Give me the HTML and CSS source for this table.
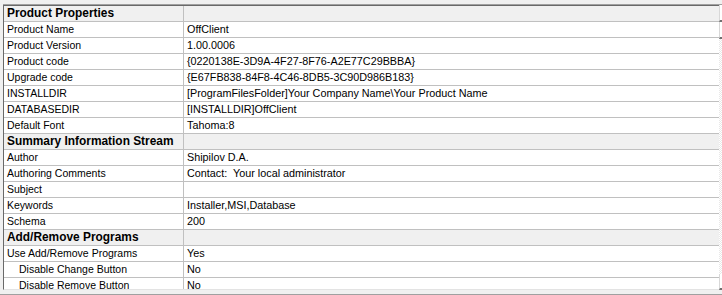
FILE: index.html
```html
<!DOCTYPE html>
<html>
<head>
<meta charset="utf-8">
<link rel="stylesheet" href="styles.css">
</head>
<body>
<div class="frame">
  <div class="grid">
    <div class="cell label head">Product Properties</div><div class="cell value head"></div>
    <div class="cell label">Product Name</div><div class="cell value">OffClient</div>
    <div class="cell label">Product Version</div><div class="cell value">1.00.0006</div>
    <div class="cell label">Product code</div><div class="cell value">{0220138E-3D9A-4F27-8F76-A2E77C29BBBA}</div>
    <div class="cell label">Upgrade code</div><div class="cell value">{E67FB838-84F8-4C46-8DB5-3C90D986B183}</div>
    <div class="cell label">INSTALLDIR</div><div class="cell value">[ProgramFilesFolder]Your Company Name\Your Product Name</div>
    <div class="cell label">DATABASEDIR</div><div class="cell value">[INSTALLDIR]OffClient</div>
    <div class="cell label">Default Font</div><div class="cell value">Tahoma:8</div>
    <div class="cell label head">Summary Information Stream</div><div class="cell value head"></div>
    <div class="cell label">Author</div><div class="cell value">Shipilov D.A.</div>
    <div class="cell label">Authoring Comments</div><div class="cell value">Contact:&nbsp; Your local administrator</div>
    <div class="cell label">Subject</div><div class="cell value"></div>
    <div class="cell label">Keywords</div><div class="cell value">Installer,MSI,Database</div>
    <div class="cell label">Schema</div><div class="cell value">200</div>
    <div class="cell label head">Add/Remove Programs</div><div class="cell value head"></div>
    <div class="cell label">Use Add/Remove Programs</div><div class="cell value">Yes</div>
    <div class="cell label sub">Disable Change Button</div><div class="cell value">No</div>
    <div class="cell label sub">Disable Remove Button</div><div class="cell value">No</div>
  </div>
  <div class="vscroll">
    <div class="sbtn"></div>
    <div class="thumb"></div>
    <div class="track"></div>
    <div class="sbtn down"></div>
  </div>
</div>
<div class="hbar"></div>
</body>
</html>
```
FILE: styles.css
```css
html, body {
  margin: 0;
  padding: 0;
  background: #f0f0f0;
  width: 722px;
  height: 295px;
  overflow: hidden;
}
body {
  font-family: "Liberation Sans", Arial, sans-serif;
  color: #000;
}
.frame {
  margin: 4px 0 0 3px;
  display: flex;
  height: 285px;
  border-top: 1px solid #a0a0a0;
}
.grid {
  flex: none;
  width: 715px;
  height: 283px;
  overflow: hidden;
  border-top: 1px solid #696969;
  border-left: 1px solid #696969;
  border-bottom: 1px solid #e3e3e3;
  display: grid;
  grid-template-columns: 180px 535px;
  grid-auto-rows: 16px;
  background: #fff;
}
.cell {
  box-sizing: border-box;
  height: 16px;
  border-bottom: 1px solid #c0c0c0;
  font-size: 10.5px;
  line-height: 15px;
  white-space: nowrap;
  overflow: hidden;
}
.label {
  border-right: 1px solid #c0c0c0;
  padding-left: 3px;
}
.value {
  padding-left: 3px;
  font-size: 10.8px;
}
.head {
  background: #f0f0f0;
}
.label.head {
  font-weight: bold;
  font-size: 11.9px;
}
.sub {
  padding-left: 15px;
}
.vscroll {
  flex: none;
  width: 3px;
  height: 285px;
  display: flex;
  flex-direction: column;
  background: repeating-conic-gradient(#e8e8e8 0 25%, #ffffff 0 50%) 0 0 / 2px 2px;
}
.sbtn, .thumb {
  flex: none;
  box-sizing: border-box;
  height: 17px;
  background: #fff;
  border-left: 1px solid #d8d8d8;
  border-bottom: 2px solid #707070;
}
.track {
  flex: 1;
}
.sbtn.down {
  height: 16px;
}
.hbar {
  height: 1px;
  margin-top: 4px;
  background: #a0a0a0;
}
```
